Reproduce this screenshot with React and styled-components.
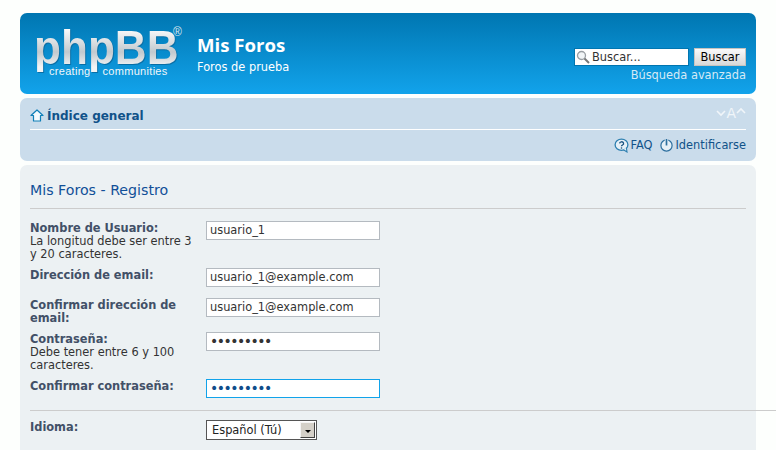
import styled, { createGlobalStyle } from 'styled-components';

const Global = createGlobalStyle`
  html, body {
    margin: 0;
    padding: 0;
    height: 450px;
    overflow: hidden;
    background: #fdfffd;
    font-family: "DejaVu Sans", Verdana, sans-serif;
    font-size: 11.4px;
  }
`;

const Wrap = styled.div`
  width: 736px;
  margin: 0 20px;
  padding-top: 13px;
  display: flex;
  flex-direction: column;
  gap: 4px;
`;

const Headerbar = styled.header`
  height: 81px;
  box-sizing: border-box;
  border-radius: 7px;
  background: linear-gradient(#0076b1, #12a3eb);
  color: #fff;
  display: flex;
  justify-content: space-between;
  padding: 9px 10px 0 16px;
`;

const SiteInfo = styled.div`
  display: flex;
`;

const Logo = styled.div`
  position: relative;
  width: 150px;
  height: 62px;
`;

const LogoWord = styled.span`
  display: block;
  width: 165px;
  font: bold 49px/50px "Liberation Sans", Arial, sans-serif;
  transform: translateX(-2px) scaleX(0.9);
  transform-origin: left top;
  background: linear-gradient(#ffffff 10%, #c2c9ce 60%, #f2f4f5 90%);
  -webkit-background-clip: text;
  background-clip: text;
  color: transparent;
  filter: drop-shadow(1px 1px 0 #0a6ea5);
`;

const LogoTag = styled.span`
  position: absolute;
  left: 13px;
  top: 43px;
  display: flex;
  gap: 12px;
  font: 11px/13px "Liberation Sans", Arial, sans-serif;
  letter-spacing: 0.3px;
  color: #f2f7fa;
  white-space: nowrap;
`;

const LogoMark = styled.span`
  position: absolute;
  left: 137px;
  top: 4px;
  font: 12px/12px "Liberation Sans", Arial, sans-serif;
  color: #dbe6ee;
`;

const SiteText = styled.div`
  margin-left: 11px;
  padding-top: 11px;
`;

const SiteTitle = styled.h1`
  margin: 0;
  font: bold 18.6px/24px "Open Sans", sans-serif;
`;

const SiteDesc = styled.p`
  margin: 3px 0 0;
  font-size: 11.4px;
  line-height: 14px;
`;

const SearchBox = styled.div`
  padding-top: 26px;
  display: flex;
  flex-direction: column;
  align-items: flex-end;
`;

const SearchRow = styled.div`
  display: flex;
  gap: 5px;
`;

const SearchInput = styled.div`
  width: 115px;
  height: 18px;
  box-sizing: border-box;
  background: #fff;
  border: 1px solid #0075b0;
  display: flex;
  align-items: center;
  gap: 2px;
  padding-left: 1px;
  color: #333;
`;

const SearchButton = styled.div`
  width: 52px;
  height: 18px;
  box-sizing: border-box;
  background: linear-gradient(#fafafa, #d8d8d8);
  border: 1px solid #c7c3bf;
  color: #000;
  line-height: 16px;
  text-align: center;
`;

const AdvLink = styled.a`
  margin-top: 2px;
  color: #d5eaf6;
  line-height: 14px;
`;

const NavBar = styled.nav`
  height: 63px;
  box-sizing: border-box;
  border-radius: 7px;
  background: #cadceb;
  padding: 0 10px;
  display: flex;
  flex-direction: column;
`;

const NavTop = styled.div`
  height: 32px;
  box-sizing: border-box;
  padding-top: 4px;
  border-bottom: 1px solid #fff;
  display: flex;
  align-items: center;
  justify-content: space-between;
`;

const Crumb = styled.a`
  display: flex;
  align-items: center;
  gap: 3px;
  color: #105289;
  font-weight: bold;
  font-size: 12px;
`;

const FontSizer = styled.div`
  display: flex;
  align-items: flex-start;
  margin-top: -6px;
  color: #f0f5f9;
  font-size: 14px;
  line-height: 16px;
`;

const NavBottom = styled.div`
  display: flex;
  justify-content: flex-end;
  gap: 7px;
  padding-top: 7px;
`;

const NavLink = styled.a`
  display: flex;
  align-items: center;
  gap: ${p => p.$gap}px;
  color: #105289;
  line-height: 16px;
`;

const Panel = styled.main`
  height: 286px;
  background: #ecf1f3;
  border-radius: 7px 7px 0 0;
  padding: 0 10px;
  color: #333;
`;

const PanelTitle = styled.h2`
  margin: 0;
  height: 44px;
  box-sizing: border-box;
  padding-top: 15px;
  border-bottom: 1px solid #ccc;
  color: #115098;
  font: 14.2px/20px "DejaVu Sans", sans-serif;
`;

const Fields = styled.div`
  display: flex;
  flex-direction: column;
  padding-top: ${p => p.$top}px;
`;

const Field = styled.div`
  display: flex;
  align-items: flex-start;
  min-height: ${p => p.$h}px;
`;

const LabelCol = styled.div`
  width: 176px;
  box-sizing: border-box;
  padding: 1px 8px 0 0;
  flex: none;
  line-height: 13px;
  color: #333;
`;

const Label = styled.div`
  font-weight: bold;
  color: #425067;
`;

const Input = styled.div`
  width: 174px;
  height: 19px;
  box-sizing: border-box;
  background: #fff;
  border: 1px solid ${p => (p.$focus ? '#11a3ea' : '#b4bac0')};
  color: ${p => (p.$focus ? '#0f4d8a' : '#333')};
  padding-left: 3px;
  line-height: 17px;
  white-space: nowrap;
`;

const Dots = styled.span`
  font-size: 14px;
  letter-spacing: -1.5px;
`;

const Rule = styled.hr`
  height: 1px;
  border: 0;
  margin: 0;
  background: #ccc;
  width: 746px;
`;

const Select = styled.div`
  width: 111px;
  height: 20px;
  box-sizing: border-box;
  border: 1px solid #555;
  background: #fff;
  color: #222;
  line-height: 18px;
  padding-left: 5px;
  display: flex;
  justify-content: space-between;
  align-items: center;
`;

const SelectArrow = styled.span`
  width: 15px;
  height: 16px;
  margin-right: 1px;
  box-sizing: border-box;
  background: #d4d0c8;
  border: 1px solid;
  border-color: #f4f4f4 #404040 #404040 #f4f4f4;
  display: flex;
  align-items: center;
  justify-content: center;
  &::after {
    content: '';
    margin-top: 2px;
    border: 3px solid transparent;
    border-top: 3px solid #000;
    border-bottom: 0;
  }
`;

function HomeIcon() {
  return (
    <svg width="14" height="13" viewBox="0 0 14 13">
      <path d="M7 1 L13 6.5 H10.5 V12 H3.5 V6.5 H1 Z" fill="#f4fafd" stroke="#0f7fb8" strokeWidth="1.2" strokeLinejoin="round" />
    </svg>
  );
}

function HelpIcon() {
  return (
    <svg width="15" height="15" viewBox="0 0 15 15">
      <ellipse cx="7.5" cy="6.8" rx="6.4" ry="5.6" fill="#e6f0f7" stroke="#2d7fb0" strokeWidth="1.3" />
      <path d="M9.5 11.8 L13 14 L12.4 9.5" fill="#e6f0f7" stroke="#2d7fb0" strokeWidth="1.1" />
      <path d="M5.6 5.4a2 1.7 0 1 1 2.9 1.6c-.7.4-1 .7-1 1.3" fill="none" stroke="#17507f" strokeWidth="1.3" />
      <circle cx="7.5" cy="10" r=".8" fill="#17507f" />
    </svg>
  );
}

function PowerIcon() {
  return (
    <svg width="13" height="14" viewBox="0 0 13 14">
      <circle cx="6.5" cy="7.5" r="5.6" fill="#e6f0f7" stroke="#2d6f9f" strokeWidth="1.2" />
      <path d="M6.5 1v6.5" stroke="#e6f0f7" strokeWidth="3.4" />
      <path d="M6.5 1v6.5" stroke="#2d6f9f" strokeWidth="1.7" />
    </svg>
  );
}

function GlassIcon() {
  return (
    <svg width="14" height="14" viewBox="0 0 14 14">
      <circle cx="5.5" cy="5.5" r="4" fill="#f2f5f7" stroke="#9a9fa4" strokeWidth="1.3" />
      <path d="M8.5 8.5 L13 13" stroke="#777" strokeWidth="2" />
    </svg>
  );
}

function Chevron({ up }) {
  return (
    <svg width="10" height="16" viewBox="0 0 10 16">
      <path d={up ? 'M1 8 L5 4 L9 8' : 'M1 6 L5 10 L9 6'} fill="none" stroke="#f0f5f9" strokeWidth="1.6" />
    </svg>
  );
}

export default function App() {
  return (
    <>
      <Global />
      <Wrap>
        <Headerbar>
          <SiteInfo>
            <Logo>
              <LogoWord>phpBB</LogoWord>
              <LogoTag>
                <span>creating</span>
                <span>communities</span>
              </LogoTag>
              <LogoMark>®</LogoMark>
            </Logo>
            <SiteText>
              <SiteTitle>Mis Foros</SiteTitle>
              <SiteDesc>Foros de prueba</SiteDesc>
            </SiteText>
          </SiteInfo>
          <SearchBox>
            <SearchRow>
              <SearchInput>
                <GlassIcon />
                Buscar...
              </SearchInput>
              <SearchButton>Buscar</SearchButton>
            </SearchRow>
            <AdvLink>Búsqueda avanzada</AdvLink>
          </SearchBox>
        </Headerbar>

        <NavBar>
          <NavTop>
            <Crumb>
              <HomeIcon />
              Índice general
            </Crumb>
            <FontSizer>
              <Chevron />
              A
              <Chevron up />
            </FontSizer>
          </NavTop>
          <NavBottom>
            <NavLink $gap={1}>
              <HelpIcon />
              FAQ
            </NavLink>
            <NavLink $gap={3}>
              <PowerIcon />
              Identificarse
            </NavLink>
          </NavBottom>
        </NavBar>

        <Panel>
          <PanelTitle>Mis Foros - Registro</PanelTitle>
          <Fields $top={12}>
            <Field $h={47}>
              <LabelCol>
                <Label>Nombre de Usuario:</Label>
                La longitud debe ser entre 3 y 20 caracteres.
              </LabelCol>
              <Input>usuario_1</Input>
            </Field>
            <Field $h={30}>
              <LabelCol>
                <Label>Dirección de email:</Label>
              </LabelCol>
              <Input>usuario_1@example.com</Input>
            </Field>
            <Field $h={34}>
              <LabelCol>
                <Label>Confirmar dirección de email:</Label>
              </LabelCol>
              <Input>usuario_1@example.com</Input>
            </Field>
            <Field $h={47}>
              <LabelCol>
                <Label>Contraseña:</Label>
                Debe tener entre 6 y 100 caracteres.
              </LabelCol>
              <Input>
                <Dots>•••••••••</Dots>
              </Input>
            </Field>
            <Field $h={31}>
              <LabelCol>
                <Label>Confirmar contraseña:</Label>
              </LabelCol>
              <Input $focus>
                <Dots>•••••••••</Dots>
              </Input>
            </Field>
          </Fields>
          <Rule />
          <Fields $top={9}>
            <Field $h={24}>
              <LabelCol>
                <Label>Idioma:</Label>
              </LabelCol>
              <Select>
                Español (Tú)
                <SelectArrow />
              </Select>
            </Field>
          </Fields>
        </Panel>
      </Wrap>
    </>
  );
}
